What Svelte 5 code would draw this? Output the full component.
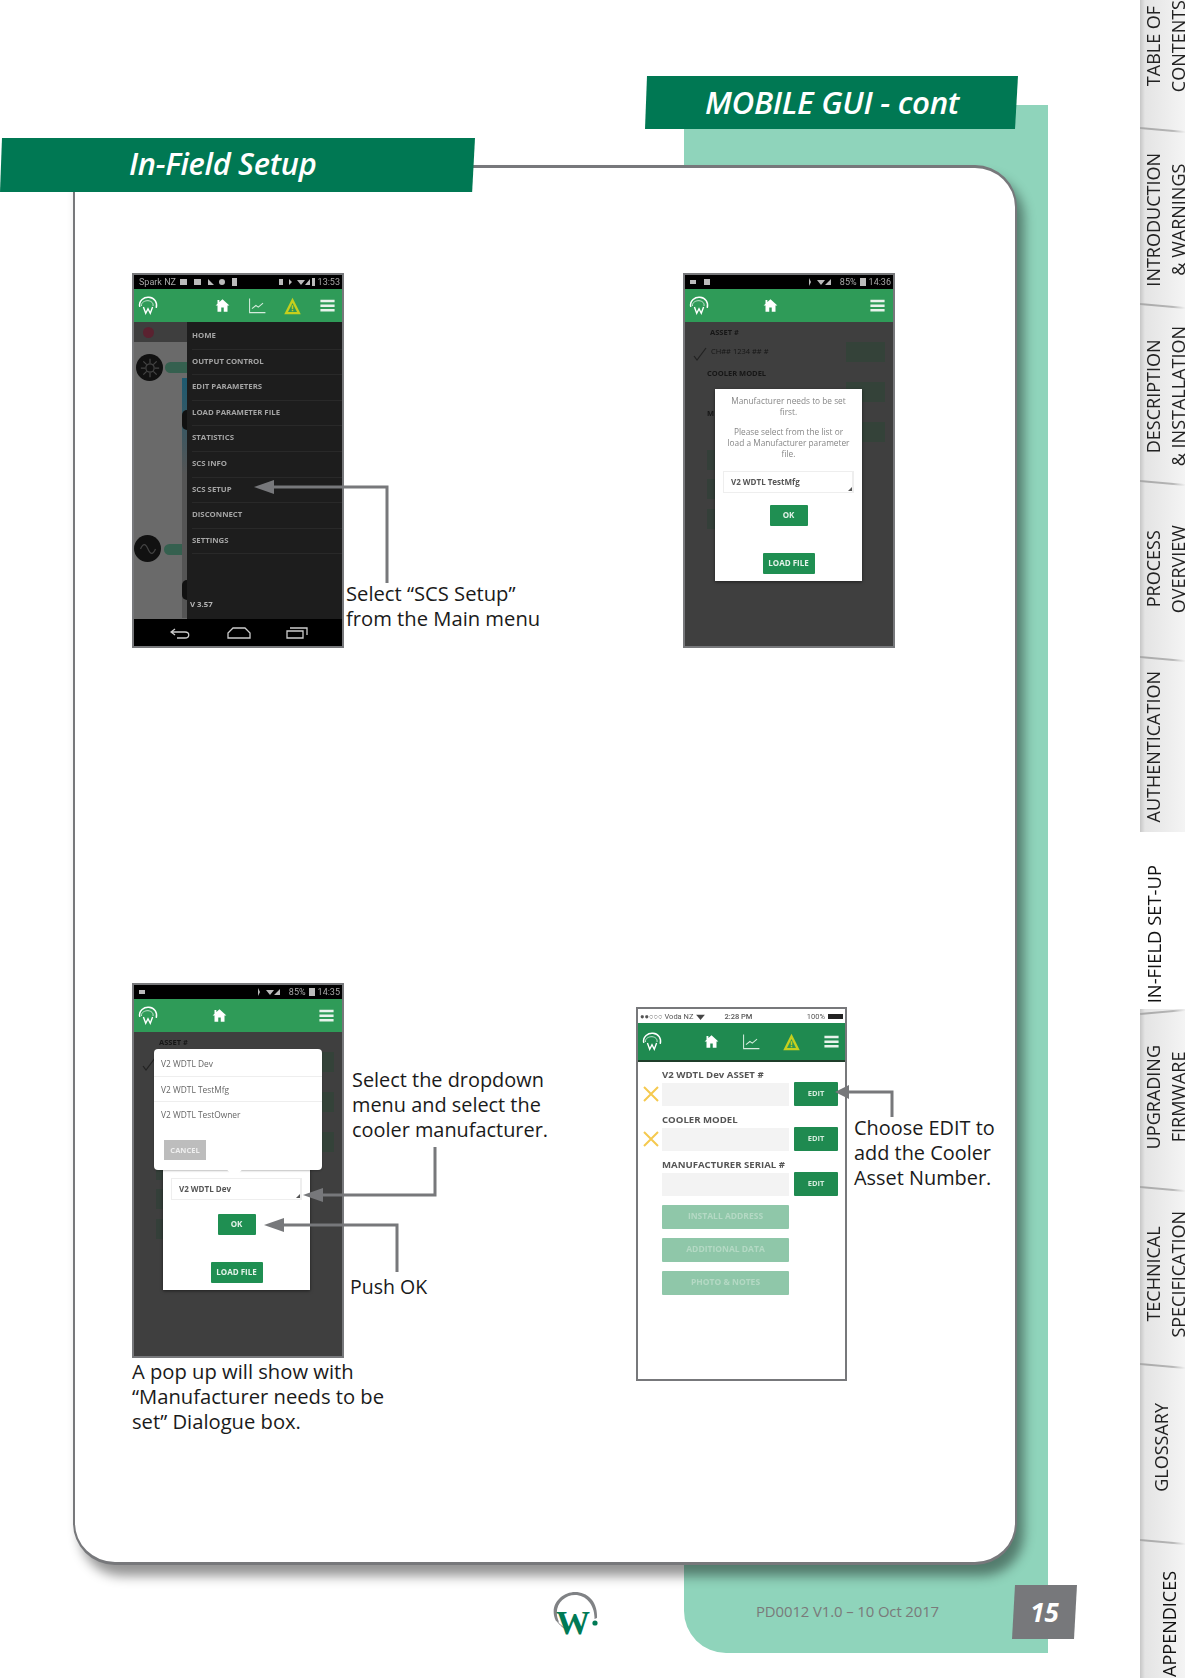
<script>
  const tabs = [
    { l: ['TABLE OF', 'CONTENTS'], cls: 'first' },
    { l: ['INTRODUCTION', '& WARNINGS'] },
    { l: ['DESCRIPTION', '& INSTALLATION'] },
    { l: ['PROCESS', 'OVERVIEW'], cls: 'proc' },
    { l: ['AUTHENTICATION'], cls: 'auth' },
    { l: ['IN-FIELD SET-UP'], active: true },
    { l: ['UPGRADING', 'FIRMWARE'], cls: 'up' },
    { l: ['TECHNICAL', 'SPECIFICATION'], cls: 'up' },
    { l: ['GLOSSARY'], cls: 'mid' },
    { l: ['APPENDICES'], cls: 'end' }
  ];
  const menu = ['HOME','OUTPUT CONTROL','EDIT PARAMETERS','LOAD PARAMETER FILE','STATISTICS','SCS INFO','SCS SETUP','DISCONNECT','SETTINGS'];
  const fields = ['V2 WDTL Dev ASSET #','COOLER MODEL','MANUFACTURER SERIAL #'];
  const options = ['V2 WDTL Dev','V2 WDTL TestMfg','V2 WDTL TestOwner'];
  const wide = ['INSTALL ADDRESS','ADDITIONAL DATA','PHOTO & NOTES'];
</script>

{#snippet header(variant, full)}
  <div class="hdr {variant}">
    <svg class="ico" viewBox="0 0 24 24" width="22" height="22" fill="none">
      <path d="M3 13C1.500 6 8 2 13 2.500C19 3 22.500 8 21 14" stroke="#fff" stroke-width="1.600"/>
      <path d="M5 12C4 8 9 6 12 6.200C16 6.500 18 9 17.500 12" stroke="#cfe8d8" stroke-width="1"/>
      <path d="M7 13l2.500 7 2.500-5 2.500 5 2.500-7" stroke="#fff" stroke-width="1.500"/>
    </svg>
    <span></span>
    <svg class="ico" viewBox="0 0 24 24" width="15" height="15"><path fill="#fff" d="M12 2 7 6.500V3H4v6.200L1 12h3v10h6v-7h4v7h6V12h3z"/></svg>
    {#if full}
      <span></span>
      <svg class="ico" viewBox="0 0 24 24" width="19" height="19" fill="none" stroke="#d5ecdd" stroke-width="1.300"><path d="M2 3v18h20"/><path d="M5 16l5-4 3 2 6-5"/></svg>
      <span></span>
      <svg class="ico" viewBox="0 0 24 24" width="19" height="18"><path fill="#c6cf1d" d="M12 1 1 23h22z"/><path fill="#2f9757" d="M12 8 6 20h12z"/><path fill="#c6cf1d" d="M11 11h2v5h-2zM11 17h2v2h-2z"/></svg>
    {:else}
      <span></span><span></span><span></span><span></span>
    {/if}
    <span></span>
    <svg class="ico" viewBox="0 0 24 24" width="17" height="17" fill="#e8f3ec"><path d="M2 4h20v3.500H2zM2 10.500h20V14H2zM2 17h20v3.500H2z"/></svg>
  </div>
{/snippet}

{#snippet backdrop(labels)}
  <div class="ghost">
    <b class="g1">ASSET #</b>
    {#if labels}
      <span class="g4">CH## 1234 ## #</span>
      <b class="g2">COOLER MODEL</b>
      <b class="g3">M</b>
    {/if}
    <svg class="gc" viewBox="0 0 14 14" width="14" height="14" fill="none" stroke="#222" stroke-width="1.200"><path d="M1 9l3 4 9-12"/></svg>
    <i class="gb gb1"></i><i class="gb gb2"></i><i class="gb gb3"></i>
    <i class="gs gs1"></i><i class="gs gs2"></i><i class="gs gs3"></i>
  </div>
{/snippet}

<div class="page">
  <div class="main">
    <div class="banner top"><h1>MOBILE GUI - cont</h1></div>
    <div class="section">
      <div class="banner sub"><h2>In-Field Setup</h2></div>
      <div class="panel">
        <div class="row r1">
          <div class="cell c1">
            <div class="phone">
              <div class="status dark">
                <span>Spark NZ</span>
                <svg viewBox="0 0 60 8" width="62" height="8" fill="#bbb"><path d="M0 1h7v6H0zM14 1h7v6h-7zM28 1l6 6h-6zM42 1a3 3 0 1 1 0 6 3 3 0 0 1 0-6zM52 0h5v8h-5z"/></svg>
                <span class="grow"></span>
                <svg viewBox="0 0 36 8" width="36" height="8" fill="#bbb"><path d="M0 1h4v6H0zM10 1l3 3-3 3zM18 2h8l-4 5zM26 7l5-6v6zM33 0h3v8h-3z"/></svg>
                <span>13:53</span>
              </div>
              {@render header('h1', true)}
              <div class="screen s1">
                <div class="strip">
                  <div class="striptop"><i class="reddot"></i></div>
                  <i class="disc d1"><svg viewBox="0 0 24 24" width="20" height="20" fill="none" stroke="#444" stroke-width="1.500"><circle cx="12" cy="12" r="5"/><path d="M12 1v5M12 18v5M1 12h5M18 12h5M4 4l4 4M16 16l4 4M20 4l-4 4M8 16l-4 4"/></svg></i>
                  <i class="pill p1"></i>
                  <i class="disc d2"><svg viewBox="0 0 24 24" width="20" height="20" fill="none" stroke="#444" stroke-width="1.500"><path d="M3 12c3-7 6-7 9 0s6 7 9 0"/></svg></i>
                  <i class="pill p2"></i>
                  <i class="bluebar"></i>
                  <i class="half h1a"></i>
                  <i class="half h2a"></i>
                </div>
                <ul class="menu">
                  {#each menu as m}<li>{m}</li>{/each}
                  <li class="ver">V 3.57</li>
                </ul>
              </div>
              <div class="nav">
                <svg viewBox="0 0 22 12" width="22" height="12" fill="none" stroke="#ccc" stroke-width="1.300"><path d="M5 2 1 5l4 3M1 5h14c5 0 5 6 0 6H7"/></svg>
                <svg viewBox="0 0 24 12" width="24" height="12" fill="none" stroke="#ccc" stroke-width="1.300"><path d="M1 11V6l5-5h12l5 5v5z"/></svg>
                <svg viewBox="0 0 22 12" width="22" height="12" fill="none" stroke="#ccc" stroke-width="1.300"><path d="M1 4h16v7H1zM4 1h17v7"/></svg>
              </div>
            </div>
            <p class="note n1">Select “SCS Setup”<br />from the Main menu</p>
          </div>
          <div class="cell c2">
            <div class="phone">
              <div class="status dark">
                <svg viewBox="0 0 24 8" width="24" height="8" fill="#bbb"><path d="M0 2h6v4H0zM14 1h6v6h-6z"/></svg>
                <span class="grow"></span>
                <svg viewBox="0 0 30 8" width="30" height="8" fill="#bbb"><path d="M2 0l2 4-2 4zM10 2h8l-4 5zM18 7l6-6v6z"/></svg>
                <span>85%</span>
                <svg viewBox="0 0 6 8" width="6" height="8" fill="#bbb"><path d="M0 0h6v8H0z"/></svg>
                <span>14:36</span>
              </div>
              {@render header('h2', false)}
              <div class="screen gray">
                {@render backdrop(true)}
                <div class="dialog d-a">
                  <p>Manufacturer needs to be set<br />first.</p>
                  <p>Please select from the list or<br />load a Manufacturer parameter<br />file.</p>
                  <div class="select">V2 WDTL TestMfg</div>
                  <div class="btn ok">OK</div>
                  <div class="btn load">LOAD FILE</div>
                </div>
              </div>
            </div>
          </div>
        </div>
        <div class="row r2">
          <div class="cell c3">
            <div class="stack">
              <div class="phoneline">
                <div class="phone">
                  <div class="status dark">
                    <svg viewBox="0 0 8 8" width="8" height="8" fill="#bbb"><path d="M0 2h6v4H0z"/></svg>
                    <span class="grow"></span>
                    <svg viewBox="0 0 30 8" width="30" height="8" fill="#bbb"><path d="M2 0l2 4-2 4zM10 2h8l-4 5zM18 7l6-6v6z"/></svg>
                    <span>85%</span>
                    <svg viewBox="0 0 6 8" width="6" height="8" fill="#bbb"><path d="M0 0h6v8H0z"/></svg>
                    <span>14:35</span>
                  </div>
                  {@render header('h3', false)}
                  <div class="screen gray">
                    {@render backdrop(false)}
                    <div class="dialog d-b">
                      <div class="select">V2 WDTL Dev</div>
                      <div class="btn ok">OK</div>
                      <div class="btn load">LOAD FILE</div>
                    </div>
                    <div class="popup">
                      {#each options as o}<div class="opt">{o}</div>{/each}
                      <div class="cancel">CANCEL</div>
                      <i class="caret"></i>
                    </div>
                  </div>
                </div>
                <div class="notes">
                  <p class="note n3">Select the dropdown<br />menu and select the<br />cooler manufacturer.</p>
                  <p class="note n4">Push OK</p>
                </div>
              </div>
              <p class="note n5">A pop up will show with<br />“Manufacturer needs to be<br />set” Dialogue box.</p>
            </div>
          </div>
          <div class="cell c4">
            <div class="phone light">
              <div class="status ios">
                <span>●●○○○ Voda NZ</span>
                <svg viewBox="0 0 10 8" width="9" height="7" fill="#444"><path d="M0 2h10L5 8z"/></svg>
                <span class="time">2:28 PM</span>
                <span class="grow"></span>
                <span>100%</span>
                <i class="batt"></i>
              </div>
              {@render header('h4', true)}
              <div class="screen form">
                {#each fields as f, i}
                  <div class="lbl">{f}</div>
                  <div class="frow">
                    {#if i < 2}
                      <svg class="x" viewBox="0 0 16 16" width="16" height="16" stroke="#f5c94f" stroke-width="2"><path d="M1 1l14 14M15 1 1 15"/></svg>
                    {/if}
                    <div class="inp"></div>
                    <div class="edit">EDIT</div>
                  </div>
                {/each}
                <div class="wides">
                  {#each wide as w}<div class="wide">{w}</div>{/each}
                </div>
              </div>
            </div>
            <p class="note n6">Choose EDIT to<br />add the Cooler<br />Asset Number.</p>
          </div>
        </div>
      </div>
    </div>
    <div class="foot">
      <svg class="logo" viewBox="0 0 50 50" width="50" height="50">
        <path d="M6 30C-2 14 12 1 25 1c13 0 23 10 22 26l-2.500 1C45 14 36 4 25 4 13 4 2 16 9 31z" fill="#808285"/>
        <path d="M7 30c2 3 5 6 9 8" stroke="#808285" stroke-width="1" fill="none"/>
        <circle cx="45" cy="32" r="2.600" fill="#007a55"/>
        <text x="23" y="43" text-anchor="middle">W</text>
      </svg>
      <span class="code">PD0012 V1.0 – 10 Oct 2017</span>
      <span class="num"><b>15</b></span>
    </div>
    <svg class="arrows" viewBox="0 0 1140 1678" width="1140" height="1678" fill="none">
      <g stroke="#77787b" stroke-width="3">
        <path d="M387 583V487H270"/>
        <path d="M435 1147V1195H320"/>
        <path d="M397 1272V1225H280"/>
        <path d="M892 1117V1092H848"/>
      </g>
      <g fill="#77787b">
        <path d="M254 487l20-7v14z"/>
        <path d="M303 1195l20-7v14z"/>
        <path d="M264 1225l20-7v14z"/>
        <path d="M835 1092l14-7v14z"/>
      </g>
    </svg>
  </div>
  <aside class="side">
    {#each tabs as t}
      <div class="tab {t.cls || ''}" class:active={t.active}>
        <span>{#each t.l as line}<div>{line}</div>{/each}</span>
      </div>
    {/each}
  </aside>
</div>

<style>
  :global(body) { margin: 0; background: #fff; }
  * { box-sizing: border-box; }
  .page { display: flex; width: 1185px; height: 1678px; overflow: hidden; font-family: "Open Sans", sans-serif; background: #fff; }
  .main { position: relative; width: 1140px; padding-top: 76px; }
  .main::before { content: ""; position: absolute; left: 684px; top: 105px; width: 364px; height: 1548px; background: #8fd4bb; border-bottom-left-radius: 42px; }
  .arrows { position: absolute; left: 0; top: 0; pointer-events: none; z-index: 5; }

  .banner { position: relative; z-index: 3; background: #007853; display: flex; align-items: center; color: #fff; font-style: italic; font-weight: 600; }
  .banner.top { margin-left: 645px; width: 373px; height: 53px; clip-path: polygon(2px 0, 100% 0, 99.200% 100%, 0 100%); padding: 0 0 2px 60px; }
  .banner.sub { width: 475px; height: 54px; clip-path: polygon(2px 0, 100% 0, 99.400% 100%, 0 100%); padding: 0 0 5px 129px; }
  h1, h2 { margin: 0; font-weight: 600; white-space: nowrap; letter-spacing: -.3px; }
  h1 { font-size: 31.300px; }
  h2 { font-size: 30.800px; }

  .section { position: relative; margin-top: 9px; }
  .panel { position: relative; z-index: 2; margin: -27px 0 0 73px; width: 944px; height: 1400px; background: #fff; border: 2px solid #77787b; border-top-width: 3px; border-bottom-width: 3px; border-radius: 0 42px 42px 42px; box-shadow: 7px 11px 12px rgba(0,0,0,.42); padding-top: 105px; }
  .row { display: flex; }
  .r1 { height: 710px; }
  .cell { display: flex; align-items: flex-start; }
  .c1 { margin-left: 57px; }
  .c2 { position: absolute; left: 608px; }
  .c3 { margin-left: 57px; }
  .c4 { position: absolute; left: 561px; margin-top: 24px; }
  .stack { display: flex; flex-direction: column; }
  .phoneline { display: flex; }

  .phone { width: 212px; height: 375px; border: 2px solid #77787b; display: flex; flex-direction: column; flex: none; background: #000; overflow: hidden; }
  .phone.light { background: #fff; width: 211px; height: 374px; }
  .status { height: 14px; display: flex; align-items: center; gap: 3px; font-family: Roboto, sans-serif; font-size: 9px; padding: 0 2px 0 5px; flex: none; filter: blur(.6px); }
  .status.dark { background: #000; color: #a8a8a8; }
  .status.ios { background: #fff; color: #555; font-size: 7.500px; height: 14px; padding: 0 2px; }
  .grow { flex: 1; }
  .time { margin-left: 16px; font-weight: 500; }
  .batt { width: 15px; height: 5px; background: #222; }

  .hdr { height: 33px; background: #2f9b58; display: grid; align-items: center; flex: none; justify-items: center; filter: blur(.4px); }
  .h1 { grid-template-columns: 28px 46px 28px 7px 28px 7px 28px 7px 28px; }
  .h2, .h3 { grid-template-columns: 28px 43px 28px 7.700px 28px 7.700px 28px 7.700px 28px; }
  .h4 { height: 39px; background: #1f8a50; border-bottom: 2px solid #1f3d2a; grid-template-columns: 28px 31px 28px 12px 28px 12px 28px 12px 28px; }
  .ico { display: block; }

  .screen { flex: 1; position: relative; overflow: hidden; }
  .s1 { display: flex; background: #6a6a6a; }
  .strip { position: relative; width: 53px; flex: none; filter: blur(.6px); }
  .striptop { height: 20px; background: #3e3e3e; display: flex; align-items: center; padding-left: 9px; }
  .reddot { width: 11px; height: 11px; border-radius: 50%; background: #5a2230; }
  .disc { position: absolute; width: 27px; height: 27px; border-radius: 50%; background: #111; display: flex; align-items: center; justify-content: center; }
  .d1 { left: 2px; top: 32px; }
  .d2 { left: 0; top: 213px; }
  .pill { position: absolute; width: 22px; height: 11px; left: 31px; border-radius: 6px 0 0 6px; background: #35604f; }
  .p1 { top: 40px; }
  .p2 { top: 222px; left: 30px; }
  .bluebar { position: absolute; right: 0; top: 56px; width: 5px; height: 240px; background: linear-gradient(#1d5a70, #555 40%); }
  .half { position: absolute; right: 0; width: 5px; height: 20px; background: #111; border-radius: 6px 0 0 6px; }
  .h1a { top: 88px; }
  .h2a { top: 258px; }
  .menu { list-style: none; margin: 0; padding: 2px 0 0 5px; flex: 1; background: #1d1d1d; font-family: "Open Sans", sans-serif; font-weight: 700; font-size: 7.800px; color: #a4a4a4; filter: blur(.6px); position: relative; }
  .menu li { height: 25.600px; line-height: 23px; border-bottom: 1px solid #292929; white-space: nowrap; }
  .menu li.ver { position: absolute; left: 3px; bottom: 10px; height: auto; border: 0; line-height: 1; color: #b5b5b5; }
  .nav { height: 27px; flex: none; background: #000; display: flex; align-items: center; justify-content: space-between; padding: 0 34px 0 36px; }

  .gray { background: #3f3f3f; }
  .ghost { position: absolute; inset: 0; filter: blur(.7px); font-size: 7.500px; color: #161616; }
  .ghost b, .g4, .gc { position: absolute; white-space: nowrap; }
  .g1 { left: 25px; top: 5px; }
  .g4 { left: 26px; top: 24px; }
  .gc { left: 8px; top: 25px; }
  .g2 { left: 22px; top: 46px; }
  .g3 { left: 22px; top: 86px; }
  .gb { position: absolute; left: 161px; width: 39px; height: 20px; background: #344239; }
  .gb1 { top: 20px; }
  .gb2 { top: 60px; }
  .gb3 { top: 100px; }
  .gs { position: absolute; left: 22px; width: 10px; height: 20px; background: #343f39; }
  .gs1 { top: 128px; }
  .gs2 { top: 157px; }
  .gs3 { top: 187px; }

  .dialog { position: absolute; left: 30px; width: 147px; background: #fff; color: #868686; font-size: 8.300px; line-height: 11px; text-align: center; padding: 0 4px; box-shadow: 0 1px 3px rgba(0,0,0,.5); font-family: "Open Sans", sans-serif; white-space: nowrap; }
  .d-a { top: 67px; height: 192px; padding-top: 6px; }
  .d-b { top: 20px; height: 238px; left: 29px; }
  .dialog p { margin: 0 0 9px; filter: blur(.5px); }
  .select { position: absolute; left: 8px; width: 131px; height: 22px; border: 1px solid #eee; border-right: 2px solid #eee; text-align: left; padding-left: 7px; line-height: 20px; font-weight: 700; color: #555; font-size: 8px; filter: blur(.4px); }
  .select::after { content: ""; position: absolute; right: 0; bottom: 1px; border: 2px solid transparent; border-right-color: #555; border-bottom-color: #555; }
  .d-a .select { top: 82px; }
  .d-b .select { top: 126px; }
  .btn { position: absolute; left: 50%; transform: translateX(-50%); background: #1f8f52; color: #e5f3ea; font-weight: 700; font-size: 8px; height: 21px; line-height: 20px; border-radius: 1px; filter: blur(.4px); }
  .ok { width: 38px; }
  .load { width: 52px; white-space: nowrap; }
  .d-a .ok { top: 116px; }
  .d-a .load { top: 164px; }
  .d-b .ok { top: 162px; }
  .d-b .load { top: 210px; }

  .popup { position: absolute; left: 20px; top: 17px; width: 168px; height: 121px; padding-top: 2px; background: #fff; border-radius: 4px; color: #666; font-size: 8.400px; box-shadow: 0 1px 2px rgba(0,0,0,.25); }
  .opt { height: 25.500px; line-height: 25px; padding-left: 7px; border-bottom: 1px solid #eee; filter: blur(.4px); }
  .opt:nth-child(3) { border: 0; }
  .cancel { position: absolute; left: 10px; top: 91px; width: 42px; height: 20px; background: #bdbdbd; color: #eee; font-size: 7.500px; font-weight: 700; line-height: 20px; text-align: center; filter: blur(.45px); }
  .caret { position: absolute; left: 75px; bottom: -5px; width: 11px; height: 11px; background: #fff; transform: rotate(45deg); }

  .form { background: #fff; padding-left: 24px; font-family: "Open Sans", sans-serif; filter: blur(.45px); }
  .lbl { font-size: 9.600px; font-weight: 700; color: #555; height: 11px; line-height: 11px; white-space: nowrap; margin-top: 7.500px; }
  .lbl:first-child { margin-top: 6.500px; }
  .frow { position: relative; display: flex; gap: 5px; height: 24px; margin-top: 2.500px; }
  .x { position: absolute; left: -19px; top: 4px; }
  .inp { width: 127px; height: 23px; margin-top: 1px; background: #f3f3f3; }
  .edit { width: 44px; height: 24px; background: #1f8a50; color: #d5ecdd; font-size: 7.500px; font-weight: 700; text-align: center; line-height: 23px; border-radius: 1px; }
  .wides { display: flex; flex-direction: column; gap: 9px; margin-top: 9px; }
  .wide { width: 127px; height: 24px; background: #8fc7a9; color: #b4d9c4; font-size: 8.500px; font-weight: 700; line-height: 22px; text-align: center; border-radius: 1px; }

  .note { margin: 0; font-family: "Open Sans", sans-serif; font-size: 20.200px; line-height: 25px; color: #1a1a1a; white-space: nowrap; }
  .n1 { margin: 308px 0 0 2px; }
  .notes { display: flex; flex-direction: column; margin-left: 8px; }
  .n3 { margin-top: 84px; font-size: 19.900px; }
  .n4 { margin-top: 132px; margin-left: -2px; font-size: 19.500px; }
  .n5 { margin-top: 1px; }
  .n6 { margin: 108px 0 0 7px; font-size: 19.900px; }

  .foot { position: relative; z-index: 1; margin-top: 24px; display: flex; align-items: flex-start; }
  .logo { margin-left: 550px; margin-top: 2px; flex: none; }
  .logo text { font-family: "Liberation Serif", serif; font-weight: 700; font-size: 34px; fill: #007a55; }
  .code { margin-left: 156px; margin-top: 12px; font-size: 14.900px; color: #7a7a7a; white-space: nowrap; line-height: 20px; letter-spacing: -.1px; }
  .num { position: absolute; left: 1012px; top: -4px; width: 65px; height: 54px; background: #77787b; clip-path: polygon(3px 0, 100% 0, 62px 100%, 0 100%); display: flex; align-items: center; justify-content: center; color: #fff; font-size: 26px; font-style: italic; }
  .num b { font-weight: 700; }

  .side { width: 45px; flex: none; margin-top: -51px; overflow: visible; }
  .tab { position: relative; height: 176.600px; padding: 12px 0 0 1px; display: flex; align-items: center; background: linear-gradient(90deg, #c6c6c6 0, #e4e4e4 5px, #f4f4f4 100%); color: #222; font-size: 18px; overflow: hidden; }
  .tab::before { content: ""; position: absolute; left: 0; top: 1px; width: 46px; height: 2px; background: linear-gradient(90deg, #a8a8a8, #b5b5b5 70%, transparent); transform: rotate(5deg); transform-origin: left top; }
  .tab:first-child::before { display: none; }
  .tab span { writing-mode: vertical-rl; transform: rotate(180deg); line-height: 25px; text-align: center; white-space: nowrap; }
  .tab span div { display: block; }
  .tab.active { background: #fff; color: #111; padding-top: 27px; font-size: 18.400px; }
  .tab.active::before { display: none; }
  .tab.active + .tab::before { top: 4px; transform: rotate(-5deg); }
  .tab.first { padding-top: 18px; }
  .tab.proc { padding-top: 5px; }
  .tab.up { padding-top: 1px; }
  .tab.auth { padding-top: 6px; }
  .tab.mid { padding: 0 0 5px 9px; }
  .tab.end { padding: 0 0 5px 17px; color: #111; }
</style>
